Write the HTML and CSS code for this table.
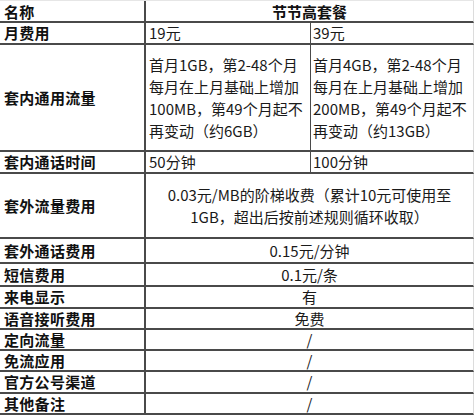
FILE: index.html
```html
<!DOCTYPE html>
<html lang="zh">
<head>
<meta charset="utf-8">
<link rel="stylesheet" href="styles.css">
</head>
<body>
<div class="sheet">
  <div class="cell label head">名称</div>
  <div class="cell span center bold head">节节高套餐</div>

  <div class="cell label">月费用</div>
  <div class="cell val">19元</div>
  <div class="cell val">39元</div>

  <div class="cell label">套内通用流量</div>
  <div class="cell val wrap">首月1GB，第2-48个月每月在上月基础上增加100MB，第49个月起不再变动（约6GB）</div>
  <div class="cell val wrap">首月4GB，第2-48个月每月在上月基础上增加200MB，第49个月起不再变动（约13GB）</div>

  <div class="cell label">套内通话时间</div>
  <div class="cell val">50分钟</div>
  <div class="cell val">100分钟</div>

  <div class="cell label">套外流量费用</div>
  <div class="cell span center wrap">0.03元/MB的阶梯收费（累计10元可使用至<br>1GB，超出后按前述规则循环收取）</div>

  <div class="cell label">套外通话费用</div>
  <div class="cell span center">0.15元/分钟</div>

  <div class="cell label">短信费用</div>
  <div class="cell span center">0.1元/条</div>

  <div class="cell label">来电显示</div>
  <div class="cell span center">有</div>

  <div class="cell label">语音接听费用</div>
  <div class="cell span center">免费</div>

  <div class="cell label">定向流量</div>
  <div class="cell span center">/</div>

  <div class="cell label">免流应用</div>
  <div class="cell span center">/</div>

  <div class="cell label">官方公号渠道</div>
  <div class="cell span center">/</div>

  <div class="cell label">其他备注</div>
  <div class="cell span center">/</div>
</div>
</body>
</html>
```

FILE: styles.css
```css
html, body {
  margin: 0;
  padding: 0;
  background: #ffffff;
}

body {
  width: 474px;
  height: 416px;
  overflow: hidden;
  font-family: "Noto Sans CJK SC", "Noto Sans", sans-serif;
  font-size: 15px;
  color: #111;
}

.sheet {
  display: grid;
  grid-template-columns: 146px 165px 163px;
  grid-template-rows: 22px 22px 107px 22px 65px 25px 23px 22px 21px 21px 21px 22px 21px;
  width: 474px;
  border-top: 1px solid #e6e6e6;
  box-sizing: border-box;
}

.cell {
  box-sizing: border-box;
  border-bottom: 2px solid #4a4a4a;
  border-right: 1px solid #4a4a4a;
  display: flex;
  align-items: center;
  line-height: 22px;
  white-space: nowrap;
  overflow: hidden;
}

.head {
  padding-top: 2px;
}

.label {
  font-weight: bold;
  padding-left: 4px;
  border-right: 2px solid #4a4a4a;
  letter-spacing: 0.3px;
}

.val {
  padding-left: 3px;
  color: #1a1a1a;
}

.val + .val {
  padding-left: 2px;
  border-right: 1px solid #dcdcdc;
}

.wrap {
  white-space: normal;
}

.span {
  grid-column: span 2;
  border-right: 1px solid #dcdcdc;
  color: #1a1a1a;
}

.center {
  justify-content: center;
  text-align: center;
}

.bold {
  font-weight: bold;
  color: #111;
}
```
